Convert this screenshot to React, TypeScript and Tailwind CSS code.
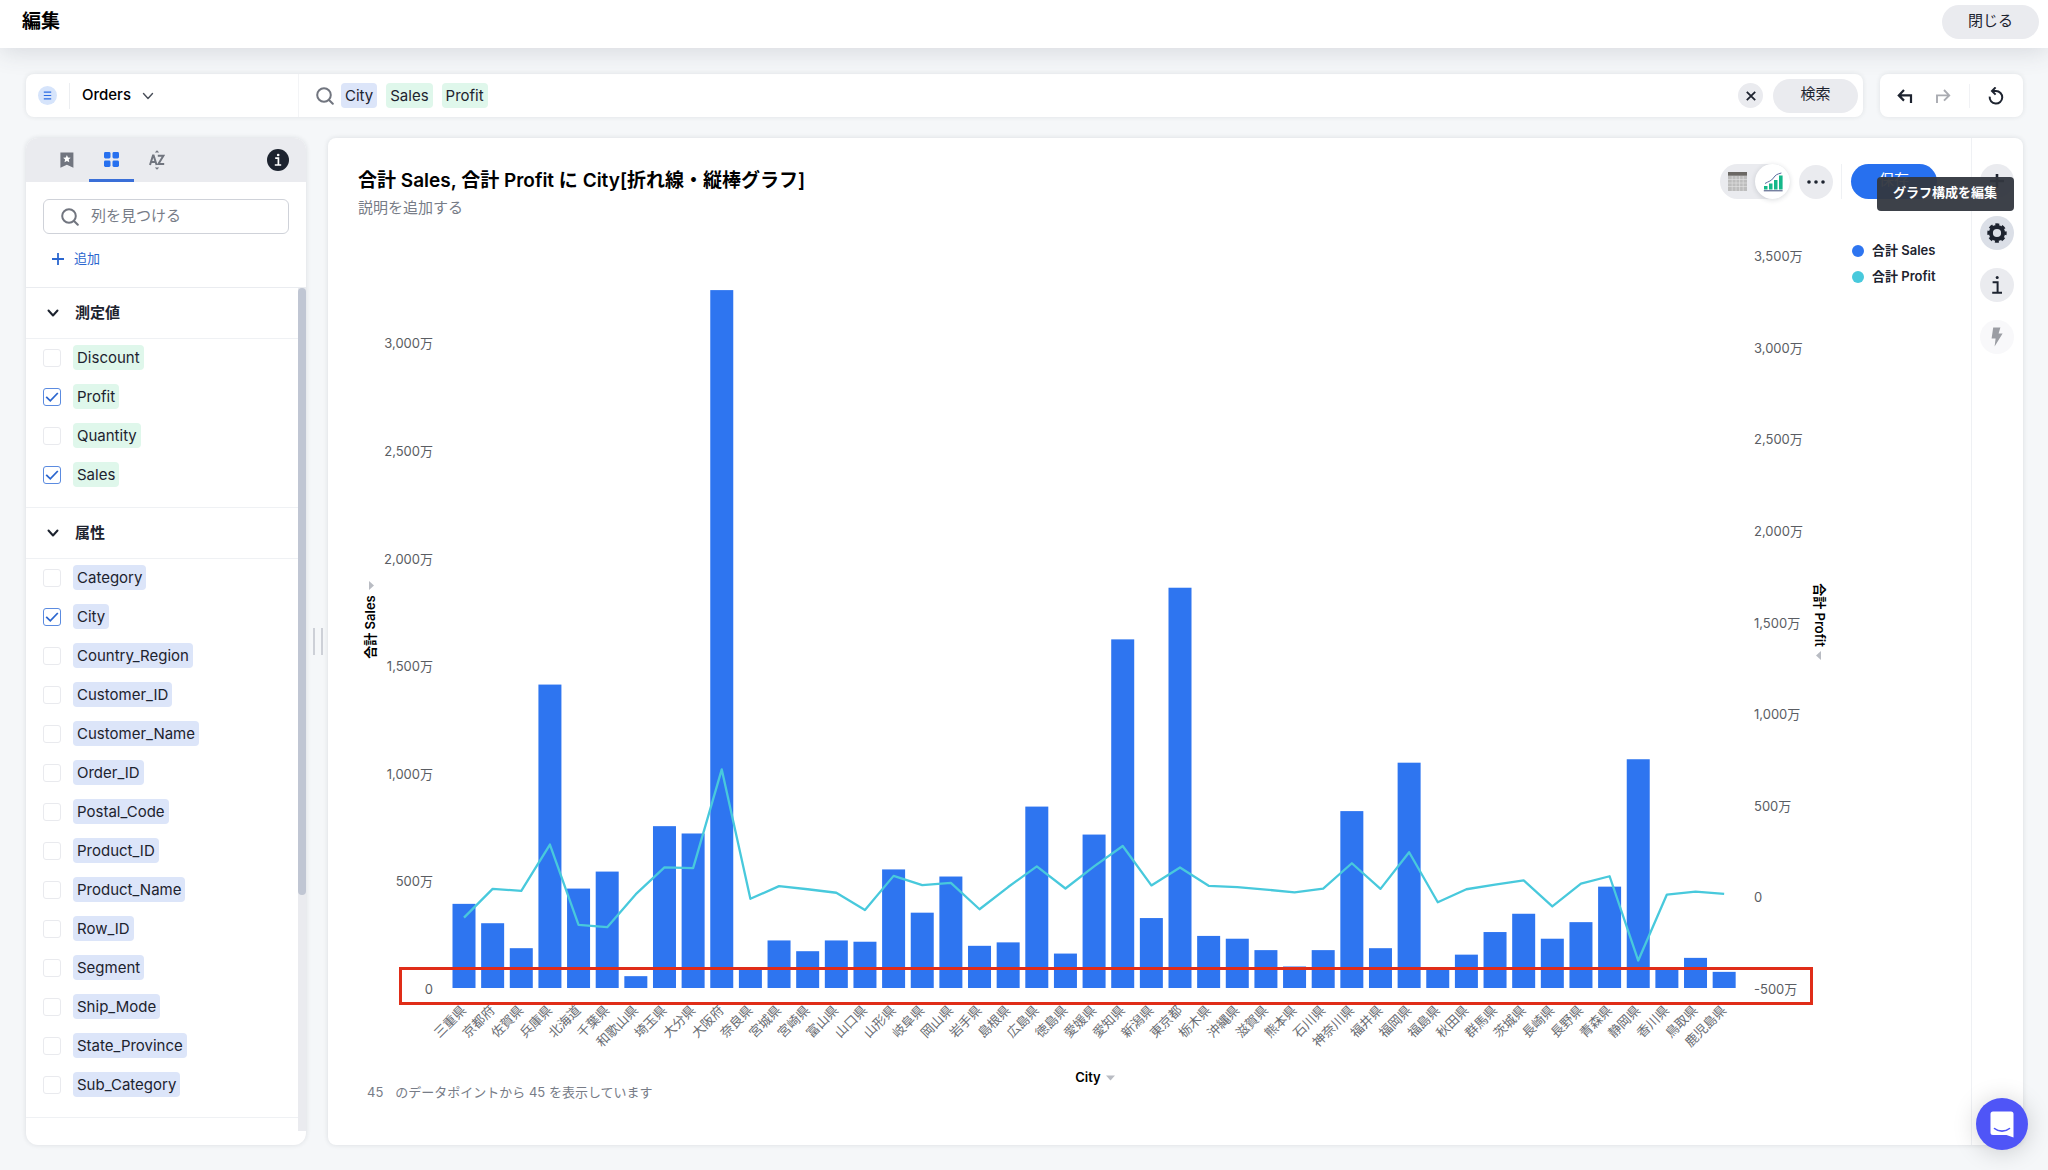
import React from 'react';

interface CityPoint {
  city: string;
  sales: number;
  profit: number;
}

type ColumnKind = 'measure' | 'attribute';

interface Column {
  name: string;
  checked?: boolean;
}

// values are in units of 万
const points: CityPoint[] = [
  { city: '三重県', sales: 391, profit: -116 },
  { city: '京都府', sales: 301, profit: 41 },
  { city: '佐賀県', sales: 185, profit: 30 },
  { city: '兵庫県', sales: 1410, profit: 283 },
  { city: '北海道', sales: 462, profit: -155 },
  { city: '千葉県', sales: 541, profit: -168 },
  { city: '和歌山県', sales: 55, profit: 12 },
  { city: '埼玉県', sales: 752, profit: 158 },
  { city: '大分県', sales: 718, profit: 154 },
  { city: '大阪府', sales: 3243, profit: 693 },
  { city: '奈良県', sales: 84, profit: -13 },
  { city: '宮城県', sales: 221, profit: 56 },
  { city: '宮崎県', sales: 171, profit: 39 },
  { city: '富山県', sales: 221, profit: 20 },
  { city: '山口県', sales: 215, profit: -74 },
  { city: '山形県', sales: 551, profit: 112 },
  { city: '岐阜県', sales: 350, profit: 62 },
  { city: '岡山県', sales: 518, profit: 74 },
  { city: '岩手県', sales: 196, profit: -70 },
  { city: '島根県', sales: 212, profit: 51 },
  { city: '広島県', sales: 843, profit: 164 },
  { city: '徳島県', sales: 160, profit: 43 },
  { city: '愛媛県', sales: 713, profit: 164 },
  { city: '愛知県', sales: 1620, profit: 275 },
  { city: '新潟県', sales: 325, profit: 60 },
  { city: '東京都', sales: 1860, profit: 158 },
  { city: '栃木県', sales: 242, profit: 58 },
  { city: '沖縄県', sales: 229, profit: 51 },
  { city: '滋賀県', sales: 176, profit: 37 },
  { city: '熊本県', sales: 100, profit: 22 },
  { city: '石川県', sales: 176, profit: 43 },
  { city: '神奈川県', sales: 822, profit: 181 },
  { city: '福井県', sales: 185, profit: 41 },
  { city: '福岡県', sales: 1047, profit: 241 },
  { city: '福島県', sales: 84, profit: -32 },
  { city: '秋田県', sales: 155, profit: 39 },
  { city: '群馬県', sales: 260, profit: 64 },
  { city: '茨城県', sales: 345, profit: 87 },
  { city: '長崎県', sales: 229, profit: -55 },
  { city: '長野県', sales: 306, profit: 70 },
  { city: '青森県', sales: 471, profit: 110 },
  { city: '静岡県', sales: 1063, profit: -350 },
  { city: '香川県', sales: 87, profit: 10 },
  { city: '鳥取県', sales: 140, profit: 26 },
  { city: '鹿児島県', sales: 75, profit: 14 },
];

const measures: Column[] = [
  { name: 'Discount' },
  { name: 'Profit', checked: true },
  { name: 'Quantity' },
  { name: 'Sales', checked: true },
];

const attributes: Column[] = [
  { name: 'Category' },
  { name: 'City', checked: true },
  { name: 'Country_Region' },
  { name: 'Customer_ID' },
  { name: 'Customer_Name' },
  { name: 'Order_ID' },
  { name: 'Postal_Code' },
  { name: 'Product_ID' },
  { name: 'Product_Name' },
  { name: 'Row_ID' },
  { name: 'Segment' },
  { name: 'Ship_Mode' },
  { name: 'State_Province' },
  { name: 'Sub_Category' },
];

const formatMan = (value: number) => (value === 0 ? '0' : `${value.toLocaleString('en-US')}万`);

const SearchIcon = () => (
  <svg viewBox="0 0 18 18" className="size-[18px] shrink-0" fill="none" stroke="#71757f" strokeWidth="2" strokeLinecap="round">
    <circle cx="8" cy="8" r="6.8" />
    <path d="M13 13 16.8 16.8" />
  </svg>
);

const ChevronDown = ({ className }: { className: string }) => (
  <svg viewBox="0 0 12 12" className={className} fill="none" stroke="currentColor" strokeLinecap="round" strokeLinejoin="round">
    <path d="M1.5 3.5 6 8.5 10.5 3.5" />
  </svg>
);

const Chip = ({ kind, children }: { kind: ColumnKind; children: React.ReactNode }) => (
  <span
    className={`rounded px-1 text-[15px] leading-[25px] whitespace-nowrap text-[#1d232f] ${
      kind === 'measure' ? 'bg-[#dff7eb]' : 'bg-[#dce5f9]'
    }`}
  >
    {children}
  </span>
);

const Header = () => (
  <header className="z-10 flex h-12 items-center justify-between bg-white pr-[9px] pb-[4px] pl-[22px] shadow-[0_4px_24px_rgba(60,70,90,0.16)]">
    <h1 className="text-[19px] leading-7 font-bold text-black">編集</h1>
    <button type="button" className="h-[34px] w-[97px] rounded-full bg-[#eaebef] pb-[2px] text-[15px] text-[#1d232f]">
      閉じる
    </button>
  </header>
);

const SearchBar = () => (
  <div className="flex gap-[17px]">
    <div className="flex h-[43px] flex-1 items-center rounded-lg bg-white pr-[5px] shadow-[0_0_5px_rgba(25,35,49,0.1)]">
      <div className="flex h-full w-[273px] items-center border-r border-[#f3f4f6] pl-3">
        <button type="button" aria-label="データソース" className="grid size-[19px] place-items-center rounded-full bg-[#d6e4fb]">
          <svg viewBox="0 0 9 9" className="size-[9px]" stroke="#2b6be4" strokeWidth="1.2">
            <path d="M0.8 1.2H8.2M0.8 4.5H8.2M0.8 7.8H8.2" />
          </svg>
        </button>
        <span className="ml-3 h-[26px] w-px bg-[#eceef1]" />
        <button type="button" className="flex items-center gap-[11px] pl-3 text-[15px] font-medium text-black">
          Orders
          <ChevronDown className="size-3 stroke-[1.4] text-[#4a4f5a]" />
        </button>
      </div>
      <div className="flex flex-1 items-center gap-[7px] pl-[17px]">
        <SearchIcon />
        <div className="flex flex-1 items-center gap-[9px]">
          <Chip kind="attribute">City</Chip>
          <Chip kind="measure">Sales</Chip>
          <Chip kind="measure">Profit</Chip>
        </div>
      </div>
      <button type="button" aria-label="クリア" className="mr-[10px] grid size-[25px] place-items-center rounded-full bg-[#eaebef]">
        <svg viewBox="0 0 10 10" className="size-[10px]" stroke="#1d232f" strokeWidth="1.8">
          <path d="M0.8 0.8 9.2 9.2M9.2 0.8 0.8 9.2" />
        </svg>
      </button>
      <button type="button" className="h-[34px] w-[85px] rounded-full bg-[#eaebef] pb-[2px] text-[15px] text-[#1d232f]">
        検索
      </button>
    </div>
    <div className="flex h-[43px] w-[143px] items-center rounded-lg bg-white pl-[17px] shadow-[0_0_5px_rgba(25,35,49,0.1)]">
      <button type="button" aria-label="元に戻す">
        <svg viewBox="0 0 16 16" className="size-4" fill="none" stroke="#1d232f" strokeWidth="2.2">
          <path d="M14 15V7.4H2.4M7 2 1.8 7.4 7 12.6" />
        </svg>
      </button>
      <button type="button" aria-label="やり直す" className="ml-[22px]">
        <svg viewBox="0 0 16 16" className="size-4" fill="none" stroke="#a9abb1" strokeWidth="1.9">
          <path d="M2 15V7.4H13.6M9 2 14.2 7.4 9 12.6" />
        </svg>
      </button>
      <span className="ml-[18px] h-6 w-px bg-[#f1f2f5]" />
      <button type="button" aria-label="リセット" className="ml-[17px]">
        <svg viewBox="0 0 18 18" className="size-[18px]" fill="none" stroke="#1d232f" strokeWidth="2">
          <path d="M2.7 9.6A6.3 6.3 0 1 0 9 4H5.4" />
          <path d="M8.6 0.4 5 4 8.6 7.6" />
        </svg>
      </button>
    </div>
  </div>
);

const ColumnRow = ({ column, kind }: { column: Column; kind: ColumnKind }) => (
  <li>
    <label className="flex h-[39px] items-center gap-3 pl-[17px]">
      <span className="grid">
        <input
          type="checkbox"
          defaultChecked={column.checked}
          className="peer size-[18px] appearance-none rounded-[3px] border border-[#e9eaee] [grid-area:1/1] checked:border-[#5b8be0]"
        />
        <svg
          viewBox="0 0 18 18"
          className="pointer-events-none invisible size-[18px] [grid-area:1/1] peer-checked:visible"
          fill="none"
          stroke="#2b66cf"
          strokeWidth="1.8"
        >
          <path d="M3.2 8.8 7.3 12.8 14.8 5" />
        </svg>
      </span>
      <Chip kind={kind}>{column.name}</Chip>
    </label>
  </li>
);

const ColumnGroup = ({ title, kind, columns }: { title: string; kind: ColumnKind; columns: Column[] }) => (
  <section className="border-b border-[#eff1f4] pb-[13px]">
    <h2 className="border-b border-[#eff1f4]">
      <button type="button" className="flex h-[50px] w-full items-center gap-4 pl-[21px] text-[15px] font-bold text-[#1d232f]">
        <ChevronDown className="size-3 stroke-2" />
        {title}
      </button>
    </h2>
    <ul className="-mt-px">
      {columns.map((column) => (
        <ColumnRow key={column.name} column={column} kind={kind} />
      ))}
    </ul>
  </section>
);

const Sidebar = () => (
  <aside className="flex w-[280px] shrink-0 flex-col overflow-hidden rounded-xl bg-white pb-[14px] shadow-[0_0_5px_rgba(25,35,49,0.12)]">
    <div className="flex h-[44px] items-stretch bg-[#eaebef] pr-[17px] pl-[18px] text-[#71757f]">
      <button type="button" aria-label="ブックマーク" className="grid w-[45px] place-items-center">
        <svg viewBox="0 0 14 16" className="h-4 w-[14px]">
          <path d="M0.4 0.5H13.4V15.7L6.9 12.8 0.4 15.7Z" fill="#71757f" />
          <path d="M6.9 3 8 5.5 10.7 5.8 8.7 7.6 9.3 10.3 6.9 8.9 4.5 10.3 5.1 7.6 3.1 5.8 5.8 5.5Z" fill="#fff" />
        </svg>
      </button>
      <button type="button" aria-label="列" className="grid w-[45px] place-items-center border-b-3 border-[#3a6fd8] pt-[2px]">
        <svg viewBox="0 0 15 15" className="size-[15px]" fill="#2770ef">
          <rect x="0" y="0" width="6.5" height="6.5" rx="1.4" />
          <rect x="8.5" y="0" width="6.5" height="6.5" rx="1.4" />
          <rect x="0" y="8.5" width="6.5" height="6.5" rx="1.4" />
          <rect x="8.5" y="8.5" width="6.5" height="6.5" rx="1.4" />
        </svg>
      </button>
      <button type="button" aria-label="並べ替え" className="grid w-[45px] place-items-center">
        <svg viewBox="0 0 18 20" className="h-5 w-[18px]" fill="none" stroke="#71757f" strokeWidth="2">
          <path d="M2 15 5 5.4H5.6L8.6 15M3 12H7.6" />
          <path d="M9.8 5.8H15.4L10.4 14H16.2" />
          <path d="M9 0.2 11.2 2.6H6.8ZM9 19.8 6.8 17.4H11.2Z" fill="#71757f" stroke="none" />
        </svg>
      </button>
      <button type="button" aria-label="情報" className="ml-auto grid place-items-center">
        <svg viewBox="0 0 22 22" className="size-[22px]">
          <circle cx="11" cy="11" r="11" fill="#1d232f" />
          <path d="M8.2 9.2H11.4V16M7.8 16H14.2" fill="none" stroke="#fff" strokeWidth="1.7" />
          <circle cx="11.2" cy="6" r="1.3" fill="#fff" />
        </svg>
      </button>
    </div>
    <label className="mx-[17px] mt-[17px] flex h-[35px] items-center gap-3 rounded-md border border-[#cfd2d9] pl-[17px]">
      <SearchIcon />
      <input
        type="text"
        aria-label="列を見つける"
        placeholder="列を見つける"
        className="min-w-0 flex-1 text-[15px] outline-none placeholder:text-[#777c87]"
      />
    </label>
    <button type="button" className="mt-[14px] ml-[26px] flex h-[22px] w-fit items-center gap-[10px] text-[13px] text-[#2b66cf]">
      <svg viewBox="0 0 12 12" className="size-3" stroke="#2b66cf" strokeWidth="1.8">
        <path d="M6 0V12M0 6H12" />
      </svg>
      追加
    </button>
    <div className="mt-[17px] flex flex-1 border-t border-[#eaecf0]">
      <div className="flex-1">
        <ColumnGroup title="測定値" kind="measure" columns={measures} />
        <ColumnGroup title="属性" kind="attribute" columns={attributes} />
      </div>
      <div className="w-2 bg-[#eaebef]">
        <div className="h-[72%] rounded-full bg-[#c0c6d3]" />
      </div>
    </div>
  </aside>
);

const Chart = () => {
  const baseY = 756;
  const salesStep = 107.6;
  const profitStep = 91.6;
  const pitch = 28.64;
  const barWidth = 23;

  const centerX = (index: number) => 106 + index * pitch;
  const profitY = (value: number) => baseY - ((value + 500) * profitStep) / 500;

  const salesTicks = [0, 500, 1000, 1500, 2000, 2500, 3000];
  const profitTicks = [-500, 0, 500, 1000, 1500, 2000, 2500, 3000, 3500];
  const line = points.map((p, i) => `${centerX(i)},${profitY(p.profit)}`).join(' ');

  return (
    <svg viewBox="0 0 1480 853" className="h-auto w-full min-w-0 flex-1 text-[13px]" role="img" aria-label="合計 Sales, 合計 Profit に City">
      <g fill="#5a5d63" textAnchor="end">
        {salesTicks.map((tick, i) => (
          <text key={tick} x="75" y={baseY + 6 - i * salesStep}>
            {formatMan(tick)}
          </text>
        ))}
      </g>
      <g fill="#5a5d63">
        {profitTicks.map((tick, i) => (
          <text key={tick} x="1396" y={baseY + 6 - i * profitStep}>
            {formatMan(tick)}
          </text>
        ))}
      </g>

      {points.map((p, i) => {
        const height = (p.sales * salesStep) / 500;
        return <rect key={p.city} x={centerX(i) - barWidth / 2} y={baseY - height} width={barWidth} height={height} fill="#2e75f0" />;
      })}
      <polyline points={line} fill="none" stroke="#48c9dc" strokeWidth="2.3" strokeLinejoin="round" />

      <g fill="#6a6d73" textAnchor="end">
        {points.map((p, i) => (
          <text key={p.city} transform={`translate(${centerX(i) + 3} ${baseY + 23}) rotate(-45)`}>
            {p.city}
          </text>
        ))}
      </g>

      <g className="font-semibold" fill="#000">
        <text transform="translate(17 395) rotate(-90)" textAnchor="middle">合計 Sales</text>
        <text transform="translate(1457 383) rotate(90)" textAnchor="middle">合計 Profit</text>
        <text x="730" y="850" textAnchor="middle">City</text>
      </g>
      <g fill="#b9bcc3">
        <path d="M11 349V358L16 353.5Z" />
        <path d="M1463 419V428L1458 423.5Z" />
        <path d="M748 843.5H757L752.5 848.5Z" />
      </g>

      <rect x="42.5" y="736.5" width="1411" height="35" fill="none" stroke="#e02d18" strokeWidth="3" />
    </svg>
  );
};

const Legend = () => (
  <ul className="ml-[14px] w-[119px] pt-[6px] text-[13px] font-semibold text-[#1d232f]">
    <li className="flex h-[26px] items-center gap-2">
      <span className="size-3 rounded-full bg-[#2e75f0]" />
      合計 Sales
    </li>
    <li className="flex h-[26px] items-center gap-2">
      <span className="size-3 rounded-full bg-[#48c9dc]" />
      合計 Profit
    </li>
  </ul>
);

const ChartToolbar = () => (
  <div className="flex items-center">
    <div className="flex h-[35px] items-center rounded-full bg-[#eaebef]">
      <button type="button" aria-label="テーブル" className="grid size-[35px] place-items-center">
        <svg viewBox="0 0 19 19" className="size-[19px]">
          <rect width="19" height="19" fill="#bdbdbd" />
          <path d="M0 7.5H19M0 11H19M0 14.5H19M4.2 4V19M8 4V19M11.6 4V19M15.2 4V19" stroke="#e6e6e6" strokeWidth="0.6" />
          <rect width="19" height="3.6" fill="#6b6864" />
        </svg>
      </button>
      <button type="button" aria-label="グラフ" className="grid size-[35px] place-items-center rounded-full bg-white shadow-[0_1px_5px_rgba(25,35,49,0.16)]">
        <svg viewBox="0 0 20 20" className="size-5">
          <path d="M1 14H4.5V17.4H1ZM6 11.5H9.5V17.4H6ZM11 8H14.5V17.4H11ZM16 3.5H19.6V17.4H16Z" fill="#14b789" />
          <path d="M0.8 18.8H19.6" stroke="#3c4a78" strokeWidth="1" />
          <path d="M2 11.5C6 9 8 9.4 10.4 6S14 2.2 18.4 1" fill="none" stroke="#5a6a9e" strokeWidth="1" />
        </svg>
      </button>
    </div>
    <button type="button" aria-label="その他" className="ml-[9px] grid size-[34px] place-items-center rounded-full bg-[#eaebef]">
      <svg viewBox="0 0 18 4" className="h-1 w-[18px]" fill="#1d232f">
        <circle cx="2" cy="2" r="1.8" />
        <circle cx="9" cy="2" r="1.8" />
        <circle cx="16" cy="2" r="1.8" />
      </svg>
    </button>
    <span className="ml-2 h-[35px] w-px bg-[#eff1f4]" />
    <button type="button" className="ml-[9px] h-[35px] w-[86px] rounded-full bg-[#2770ef] pb-[2px] text-[15px] text-white">
      保存
    </button>
  </div>
);

const Rail = () => (
  <div className="flex w-[52px] flex-col items-center gap-[18px] border-l border-[#eff1f4] pt-[26px] pr-[2px]">
    <button type="button" aria-label="追加" className="grid size-[34px] place-items-center rounded-full bg-[#eaebef]">
      <svg viewBox="0 0 14 14" className="size-[14px]" stroke="#1d232f" strokeWidth="2.6">
        <path d="M7 0V14M0 7H14" />
      </svg>
    </button>
    <div className="relative">
      <button type="button" aria-label="グラフ構成を編集" className="grid size-[34px] place-items-center rounded-full bg-[#dbdfe7]">
        <svg viewBox="0 0 20 20" className="size-5">
          <circle cx="10" cy="10" r="6.1" fill="none" stroke="#1d232f" strokeWidth="4" />
          <circle cx="10" cy="10" r="8.4" fill="none" stroke="#1d232f" strokeWidth="2.6" strokeDasharray="3.9 2.7" strokeDashoffset="1.95" />
        </svg>
      </button>
      <div
        role="tooltip"
        className="absolute right-0 bottom-[39px] z-10 flex h-[34px] w-[137px] items-center justify-center rounded-sm bg-[#33373f]/95 pb-[2px] text-[13px] font-bold whitespace-nowrap text-white"
      >
        グラフ構成を編集
      </div>
    </div>
    <button type="button" aria-label="情報" className="grid size-[34px] place-items-center rounded-full bg-[#eaebef]">
      <svg viewBox="0 0 12 20" className="h-5 w-3">
        <path d="M1.6 7.2H6.6V17.6M1.2 17.8H11" fill="none" stroke="#1d232f" strokeWidth="2" />
        <circle cx="6.2" cy="2.4" r="1.5" fill="#1d232f" />
      </svg>
    </button>
    <button type="button" aria-label="アクション" className="grid size-[34px] place-items-center rounded-full bg-[#f8f8fa]">
      <svg viewBox="0 0 12 20" className="h-5 w-3" fill="#9b9da3">
        <path d="M2.2 0.6H9.4L7.6 6.6H11.6L3.6 19.4 4.6 11.6H0.6Z" />
      </svg>
    </button>
  </div>
);

const Answer = () => (
  <main className="flex flex-1 rounded-lg bg-white shadow-[0_0_5px_rgba(25,35,49,0.12)]">
    <div className="flex min-w-0 flex-1 flex-col pl-[30px]">
      <div className="flex items-start justify-between pt-[26px] pr-[34px]">
        <div>
          <h2 className="text-[19px] leading-[34px] font-semibold text-black">合計 Sales, 合計 Profit に City[折れ線・縦棒グラフ]</h2>
          <p className="text-[15px] leading-5 text-[#777c87]">説明を追加する</p>
        </div>
        <ChartToolbar />
      </div>
      <div className="mt-[14px] flex items-start">
        <Chart />
        <Legend />
      </div>
      <p className="-mt-px ml-[9px] text-[13px] leading-4 text-[#777c87]">
        <span className="mr-3">45</span>
        のデータポイントから 45 を表示しています
      </p>
    </div>
    <Rail />
  </main>
);

const App: React.FC = () => (
  <div
    lang="ja"
    className="flex min-h-screen flex-col bg-[#f5f7f9] font-[Inter,'Noto_Sans_CJK_JP',sans-serif] text-[#1d232f]"
  >
    <Header />
    <div className="flex flex-1 flex-col gap-[21px] pt-[26px] pr-[25px] pb-[25px] pl-[26px]">
      <SearchBar />
      <div className="flex flex-1">
        <Sidebar />
        <div className="flex w-[22px] items-center justify-center gap-[6px] pl-[2px]">
          <span className="h-[27px] w-[2px] bg-[#cdd0d7]" />
          <span className="h-[27px] w-[2px] bg-[#cdd0d7]" />
        </div>
        <Answer />
      </div>
    </div>
    <button
      type="button"
      aria-label="チャット"
      className="fixed right-5 bottom-5 grid size-[52px] place-items-center rounded-full bg-[#4f55f7] shadow-[0_2px_24px_rgba(0,0,0,0.18)]"
    >
      <svg viewBox="0 0 24 27" className="h-[27px] w-6">
        <path d="M3 0.5H21A2.5 2.5 0 0 1 23.5 3V26.5L16.5 24H3A2.5 2.5 0 0 1 0.5 21.5V3A2.5 2.5 0 0 1 3 0.5Z" fill="#fff" />
        <path d="M4.5 17.5C8.5 21 15.5 21 19.5 17.5" fill="none" stroke="#4f55f7" strokeWidth="1.6" strokeLinecap="round" />
      </svg>
    </button>
  </div>
);

export default App;
